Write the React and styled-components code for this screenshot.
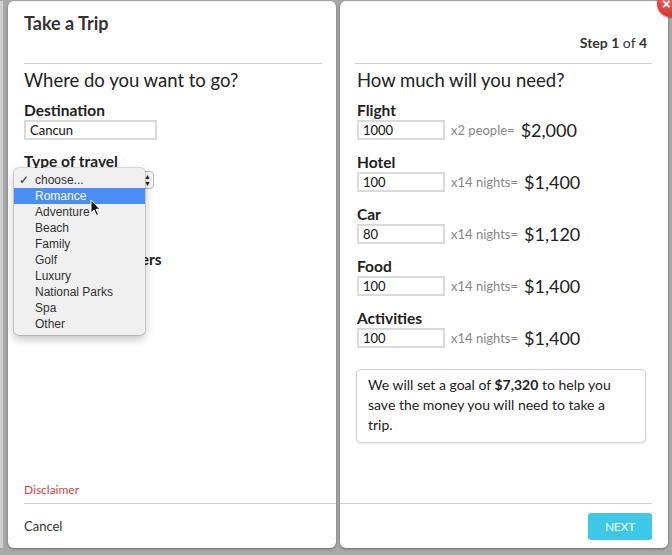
import React from "react";
import styled, { createGlobalStyle } from "styled-components";

const Global = createGlobalStyle`
  html, body { margin: 0; padding: 0; }
  body { font-family: Lato, "Noto Sans", sans-serif; color: #222; }
  * { box-sizing: border-box; }
`;

const Page = styled.div`
  position: relative;
  width: 672px;
  height: 555px;
  overflow: hidden;
  background: #a9a9a9;
  display: flex;
  flex-direction: column;
`;

const Stage = styled.div`
  display: flex;
  height: 548px;
  margin-top: 1px;
  padding-left: 5px;
  gap: 4px;
  border-left: 3px solid #cfcfcf;
  position: relative;
`;

const Panel = styled.div`
  position: relative;
  width: 328px;
  height: 547px;
  background: #fff;
  border-radius: 6px;
  box-shadow: 0 1px 3px rgba(0,0,0,0.35), inset 0 10px 0 -9px #f2f2f2;
  display: flex;
  flex-direction: column;
  padding: ${p => (p.$right ? "0 16px 0 17px" : "0 14px 0 16px")};
`;

const Title = styled.h1`
  margin: 10px 0 0;
  font-size: 18px;
  line-height: 24px;
  font-weight: 700;
  color: #333;
  height: 52px;
`;

const StepLine = styled.div`
  margin-top: 32px;
  height: 30px;
  font-size: 14px;
  line-height: 20px;
  text-align: right;
  color: #333;
  padding-right: 5px;
  b { font-weight: 700; }
`;

const Divider = styled.hr`
  margin: 0;
  border: 0;
  border-top: 1px solid #cfcfcf;
  margin-left: ${p => p.$inset || 0}px;
`;

const Heading = styled.h2`
  margin: 3px 0 7px;
  font-size: 18.5px;
  line-height: 26px;
  font-weight: 400;
  color: #222;
`;

const Field = styled.div`
  display: flex;
  flex-direction: column;
  margin-bottom: ${p => p.$gap ?? 11}px;
`;

const Label = styled.label`
  font-size: 15.5px;
  line-height: 20px;
  font-weight: 700;
  color: #222;
`;

const Row = styled.div`
  display: flex;
  align-items: center;
  height: 20px;
`;

const Input = styled.input`
  width: ${p => p.$w || 133}px;
  height: 20px;
  border: 2px solid #dadada;
  padding: 0 4px;
  font-family: Lato, "Noto Sans", sans-serif;
  font-size: 13px;
  color: #111;
  outline: none;
  background: #fff;
`;

const Multiplier = styled.span`
  margin-left: 6px;
  font-size: 13px;
  color: #888;
`;

const Amount = styled.span`
  margin-left: 6px;
  font-size: 18px;
  color: #222;
`;

const FakeSelect = styled.div`
  position: relative;
  width: 130px;
  height: 18px;
  border: 1px solid #bbb;
  border-radius: 4px;
  background: #f8f8f8;
`;

const Arrows = styled.span`
  position: absolute;
  right: 2px;
  top: 1px;
  font-size: 7px;
  line-height: 7px;
  display: flex;
  flex-direction: column;
  color: #222;
`;

const Spacer = styled.div`
  flex: 1;
`;

const Disclaimer = styled.a`
  font-size: 12px;
  line-height: 16px;
  color: #d0464c;
  margin-bottom: 5px;
`;

const Footer = styled.div`
  height: 45px;
  display: flex;
  align-items: center;
  justify-content: ${p => (p.$right ? "flex-end" : "flex-start")};
  border-top: 1px solid #cfcfcf;
  margin-right: ${p => (p.$right ? 0 : -14)}px;
  margin-left: ${p => (p.$right ? -17 : 0)}px;
`;

const Cancel = styled.span`
  font-size: 13px;
  color: #333;
`;

const NextButton = styled.button`
  width: 64px;
  height: 27px;
  margin-top: 1px;
  border: 0;
  border-radius: 3px;
  background: #3ec8e7;
  color: #fff;
  font-family: Lato, "Noto Sans", sans-serif;
  font-size: 12px;
  letter-spacing: -0.2px;
`;

const GoalBox = styled.div`
  margin: 9px 6px 0 -1px;
  border: 1px solid #d2d2d2;
  border-radius: 5px;
  box-shadow: 0 1px 2px rgba(0,0,0,0.12);
  padding: 5px 20px 7px 11px;
  font-size: 14px;
  line-height: 20px;
  color: #222;
  b { font-weight: 700; }
`;

const Menu = styled.ul`
  position: absolute;
  left: 6px;
  top: 167px;
  width: 131px;
  margin: 0;
  padding: 4px 0 3px;
  list-style: none;
  background: #f0f0f0;
  border-radius: 5px;
  box-shadow: 0 0 0 1px rgba(0,0,0,0.12), 0 4px 10px rgba(0,0,0,0.25);
  font-family: "Liberation Sans", Arial, sans-serif;
  z-index: 5;
`;

const MenuItem = styled.li`
  position: relative;
  height: 16px;
  line-height: 16px;
  padding-left: 21px;
  font-size: 12px;
  color: ${p => (p.$active ? "#fff" : "#333")};
  background: ${p => (p.$active ? "#4a8ef5" : "transparent")};
`;

const Check = styled.span`
  position: absolute;
  left: 5px;
  top: 0;
  font-size: 12px;
`;

const Cursor = styled.svg`
  position: absolute;
  left: 82px;
  top: 198px;
  z-index: 6;
`;

const CloseButton = styled.div`
  position: absolute;
  right: -16px;
  top: -11px;
  width: 27px;
  height: 27px;
  border-radius: 50%;
  background: radial-gradient(circle at 40% 35%, #f0635c, #c82620);
  box-shadow: 0 1px 2px rgba(0,0,0,0.4);
  color: #fff;
  font-family: "Liberation Sans", Arial, sans-serif;
  font-size: 15px;
  font-weight: 700;
  line-height: 27px;
  padding-left: 5px;
  z-index: 8;
`;

const BackText = styled.div`
  margin: 5px 0 0 65px;
  font-size: 16px;
  line-height: 20px;
  color: #555;
`;

const travelTypes = ["Romance", "Adventure", "Beach", "Family", "Golf", "Luxury", "National Parks", "Spa", "Other"];

const costs = [
  { label: "Flight", value: "1000", mult: "x2 people=", total: "$2,000" },
  { label: "Hotel", value: "100", mult: "x14 nights=", total: "$1,400" },
  { label: "Car", value: "80", mult: "x14 nights=", total: "$1,120" },
  { label: "Food", value: "100", mult: "x14 nights=", total: "$1,400" },
  { label: "Activities", value: "100", mult: "x14 nights=", total: "$1,400" },
];

export default function App() {
  return (
    <Page>
      <Global />
      <Stage>
        <Panel>
          <Title>Take a Trip</Title>
          <Divider />
          <Heading>Where do you want to go?</Heading>
          <Field>
            <Label>Destination</Label>
            <Input defaultValue="Cancun" />
          </Field>
          <Field $gap={20}>
            <Label>Type of travel</Label>
            <FakeSelect>
              <Arrows><span>▲</span><span>▼</span></Arrows>
            </FakeSelect>
          </Field>
          <Field $gap={20}>
            <Label>Duration</Label>
          </Field>
          <Field>
            <Label>Number of travelers</Label>
          </Field>
          <Spacer />
          <Disclaimer>Disclaimer</Disclaimer>
          <Footer>
            <Cancel>Cancel</Cancel>
          </Footer>
          <Menu>
            <MenuItem><Check>✓</Check>choose...</MenuItem>
            {travelTypes.map((t, i) => (
              <MenuItem key={t} $active={i === 0}>{t}</MenuItem>
            ))}
          </Menu>
          <Cursor width="12" height="18" viewBox="0 0 12 18">
            <path d="M1 1 L1 14 L4 11 L6.5 16.5 L8.5 15.6 L6 10.3 L10 10.3 Z" fill="#111" stroke="#fff" strokeWidth="1" />
          </Cursor>
        </Panel>
        <Panel $right>
          <StepLine><b>Step 1</b> of <b>4</b></StepLine>
          <Divider $inset={-2} />
          <Heading>How much will you need?</Heading>
          {costs.map(c => (
            <Field key={c.label} $gap={12}>
              <Label>{c.label}</Label>
              <Row>
                <Input $w={88} defaultValue={c.value} />
                <Multiplier>{c.mult}</Multiplier>
                <Amount>{c.total}</Amount>
              </Row>
            </Field>
          ))}
          <GoalBox>
            We will set a goal of <b>$7,320</b> to help you save the money you will need to take a trip.
          </GoalBox>
          <Spacer />
          <Footer $right>
            <NextButton>NEXT</NextButton>
          </Footer>
          <CloseButton>×</CloseButton>
        </Panel>
      </Stage>
      <BackText>Consider investing a portion of</BackText>
    </Page>
  );
}
